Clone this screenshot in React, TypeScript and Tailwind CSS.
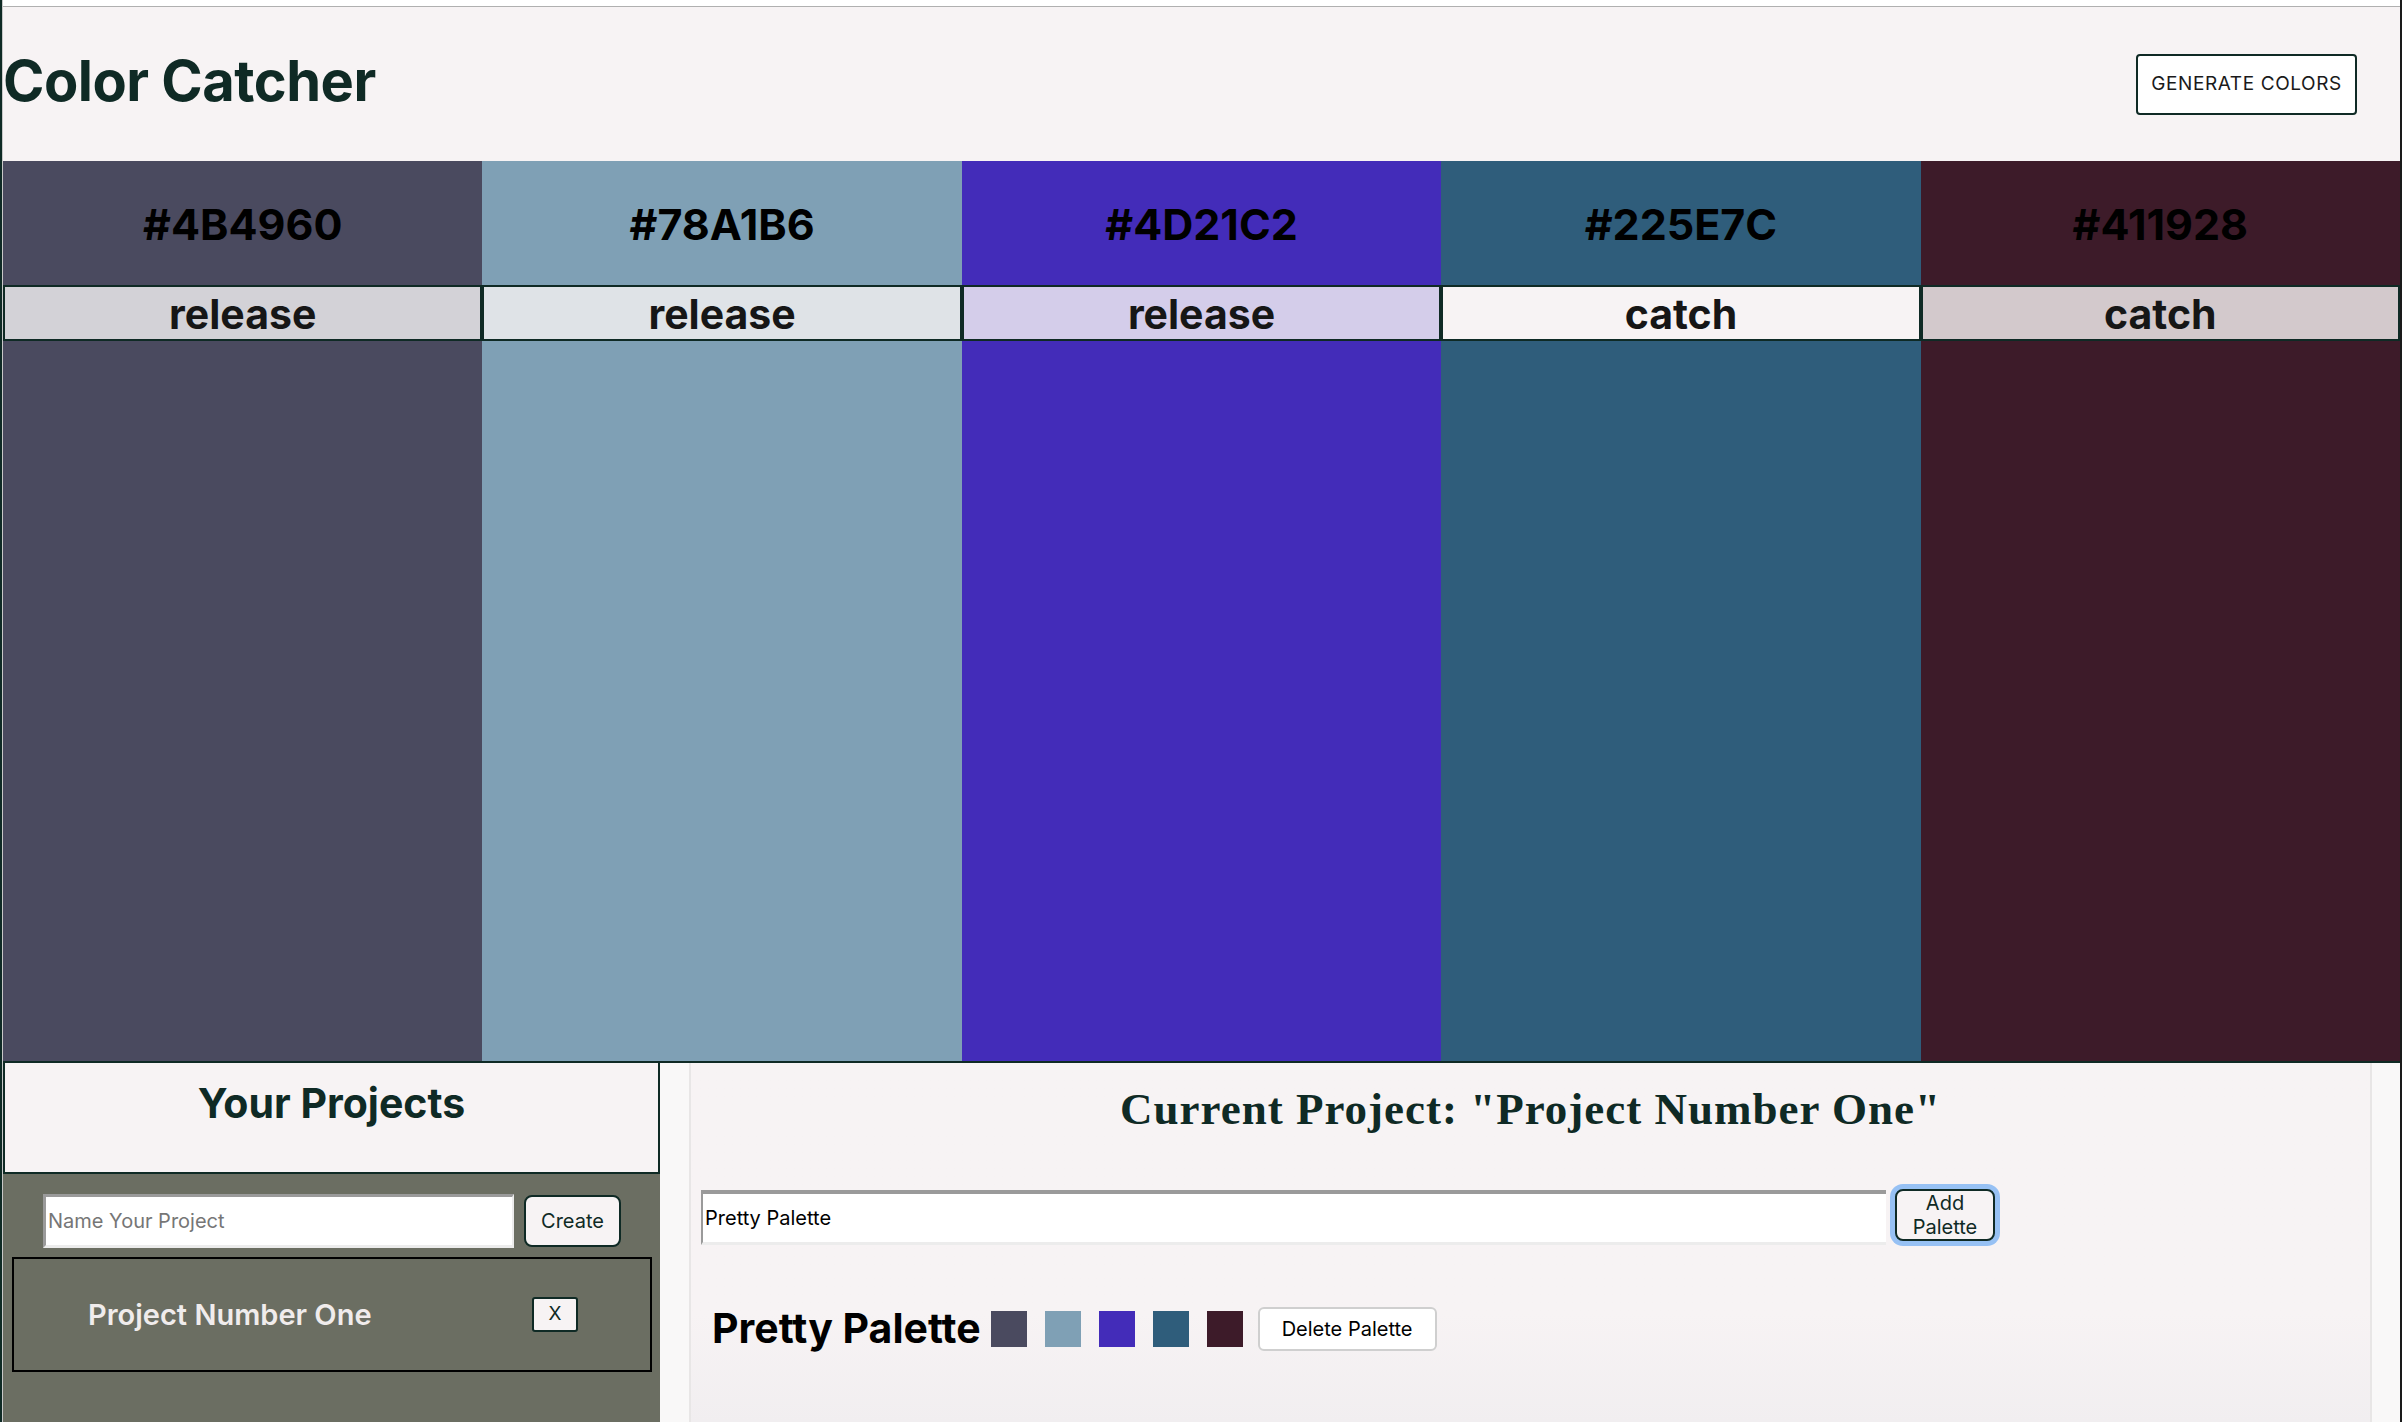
import React from "react";

const colors = [
  { hex: "#4B4960", bg: "bg-[#4a4a5f]", bar: "bg-[#d3d2d7]", label: "release" },
  { hex: "#78A1B6", bg: "bg-[#7fa0b5]", bar: "bg-[#dfe3e7]", label: "release" },
  { hex: "#4D21C2", bg: "bg-[#432cb9]", bar: "bg-[#d4cdea]", label: "release" },
  { hex: "#225E7C", bg: "bg-[#2f5d7b]", bar: "bg-[#f7f3f4]", label: "catch" },
  { hex: "#411928", bg: "bg-[#3d1b29]", bar: "bg-[#d3c9cc]", label: "catch" },
];

const swatches = ["bg-[#4a4a5f]", "bg-[#7fa0b5]", "bg-[#432cb9]", "bg-[#2f5d7b]", "bg-[#3d1b29]"];

const sans = "font-['Inter','Liberation_Sans',sans-serif]";

const App = () => {
  return (
    <div className={`w-[2402px] h-[1422px] flex bg-[#f7f3f4] overflow-hidden ${sans}`}>
      {/* left window edge */}
      <div className="w-[2px] bg-[#0f2a25]" />
      <div className="w-px bg-[#c8c8c8]" />

      <div className="flex-1 flex flex-col min-w-0">
        {/* top strip */}
        <div className="h-[7px] bg-white border-b border-[#b0b0b0] shrink-0" />

        {/* Header */}
        <header className="h-[154px] shrink-0 flex items-center justify-between bg-[#f7f3f4] pr-[43px]">
          <h1 className="text-[56px] leading-none font-bold text-[#0f2a25] tracking-[-0.5px] -mt-[6px]">Color Catcher</h1>
          <button className="w-[221px] h-[61px] rounded-[4px] border-2 border-[#0f2a25] bg-white text-[19px] tracking-[0.6px] text-[#1a1a1a]">
            GENERATE COLORS
          </button>
        </header>

        {/* Color columns */}
        <div className="h-[900px] shrink-0 flex">
          {colors.map((c) => (
            <div key={c.hex} className={`flex-1 flex flex-col ${c.bg}`}>
              <div className="h-[124px] flex items-center justify-center">
                <span className="text-[43px] font-bold text-black leading-none mt-[2px]">{c.hex}</span>
              </div>
              <div className={`h-[56px] border-2 border-[#0f2a25] flex items-center justify-center ${c.bar}`}>
                <span className="text-[41px] font-bold text-[#161616] leading-none mt-[2px]">{c.label}</span>
              </div>
            </div>
          ))}
        </div>

        <div className="h-[2px] bg-[#0f2a25] shrink-0" />

        {/* Bottom area */}
        <div className="flex-1 flex min-h-0">
          {/* Projects panel */}
          <div className="w-[657px] flex flex-col bg-[#6b6e62]">
            <div className="h-[111px] border-2 border-t-0 border-[#0f2a25] bg-[#f7f3f4] flex justify-center pt-[20px]">
              <h2 className="text-[41px] font-bold text-[#0f2a25] leading-none">Your Projects</h2>
            </div>
            <div className="flex items-center pl-[40px] pt-[20px] gap-[10px]">
              <input
                placeholder="Name Your Project"
                className="w-[471px] h-[54px] bg-white border-t-[3px] border-l-[3px] border-[#9a9a9a] border-b-[3px] border-b-[#ececec] border-r-[2px] border-r-[#ececec] px-[2px] text-[20px] text-black placeholder:text-[#767676] outline-none"
              />
              <button className="w-[97px] h-[52px] rounded-[8px] border-2 border-[#0f2a25] bg-[#f7f3f4] text-[20px] text-[#0f2a25]">
                Create
              </button>
            </div>
            <div className="ml-[9px] mr-[8px] mt-[9px] h-[115px] border-2 border-black flex items-center justify-between pl-[74px] pr-[72px]">
              <span className="text-[29px] font-semibold text-[#f0ecec]">Project Number One</span>
              <button className="w-[46px] h-[35px] rounded-[3px] border-2 border-[#0f2a25] bg-[#f7f3f4] text-[19px] text-[#0f2a25]">
                X
              </button>
            </div>
          </div>

          <div className="w-[29px] bg-[#f9f8f8]" />

          {/* Current project panel */}
          <div className="flex-1 flex flex-col border-x-2 border-[#e8e6e6] bg-gradient-to-b from-[#f7f3f4] from-70% to-[#f1eef0]">
            <h2 className="text-center font-['Liberation_Serif',serif] font-bold text-[45px] tracking-[1px] leading-none text-[#0f2a25] pt-[24px]">
              Current Project: "Project Number One"
            </h2>
            <div className="flex items-center pl-[10px] pt-[58px] gap-[9px]">
              <input
                defaultValue="Pretty Palette"
                className="w-[1185px] h-[55px] bg-white border-t-[4px] border-l-[2px] border-[#9a9a9a] border-b-[3px] border-b-[#ececec] border-r-0 px-[2px] text-[20px] text-black outline-none"
              />
              <button className="w-[100px] h-[52px] -mt-[5px] rounded-[8px] border-2 border-[#0f2a25] bg-[#f7f3f4] text-[20px] leading-[24px] text-[#0f2a25] ring-[5px] ring-[#97c1f4]">
                Add
                <br />
                Palette
              </button>
            </div>
            <div className="flex items-center pl-[21px] pt-[62px] gap-[18px]">
              <span className="text-[41px] font-bold text-black leading-none -mr-[8px] -mt-[2px]">Pretty Palette</span>
              {swatches.map((s) => (
                <div key={s} className={`w-[36px] h-[36px] ${s}`} />
              ))}
              <button className="-ml-[3px] w-[179px] h-[44px] rounded-[6px] border-2 border-[#cfcfcf] bg-white text-[20px] text-black">
                Delete Palette
              </button>
            </div>
          </div>

          <div className="w-[28px] bg-[#f9f8f8]" />
        </div>
      </div>

      {/* right window edge */}
      <div className="w-[2px] bg-[#1a1a1a]" />
    </div>
  );
};

export default App;
